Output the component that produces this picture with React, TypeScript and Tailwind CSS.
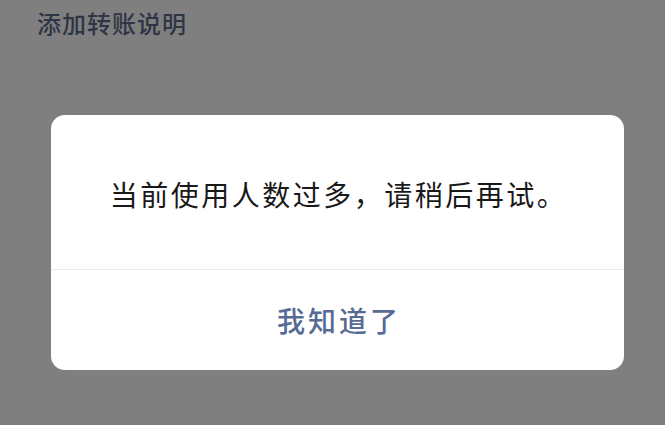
export default function App() {
  return (
    <div
      className="w-[665px] h-[425px] bg-[#7f7f7f] flex flex-col overflow-hidden"
      style={{ fontFamily: '"Noto Sans CJK SC", "Noto Sans", sans-serif' }}
    >
      <div className="pl-[37px] pt-[7px] h-[115px] text-[24px] leading-[32px] font-medium text-[#2e3545] tracking-[1px]">
        添加转账说明
      </div>
      <div className="mx-[51px] w-[573px] h-[255px] bg-white rounded-[14px] flex flex-col">
        <div className="h-[155px] border-b border-[#ececec] flex items-center justify-center pt-[3px]">
          <p className="text-[28px] leading-[36px] text-[#191919] tracking-[2.5px] pl-[2px]">当前使用人数过多，请稍后再试。</p>
        </div>
        <button className="flex-1 flex items-center justify-center text-[28px] leading-[36px] font-medium text-[#576b95] tracking-[3px] pl-[3px]">
          我知道了
        </button>
      </div>
    </div>
  );
}
